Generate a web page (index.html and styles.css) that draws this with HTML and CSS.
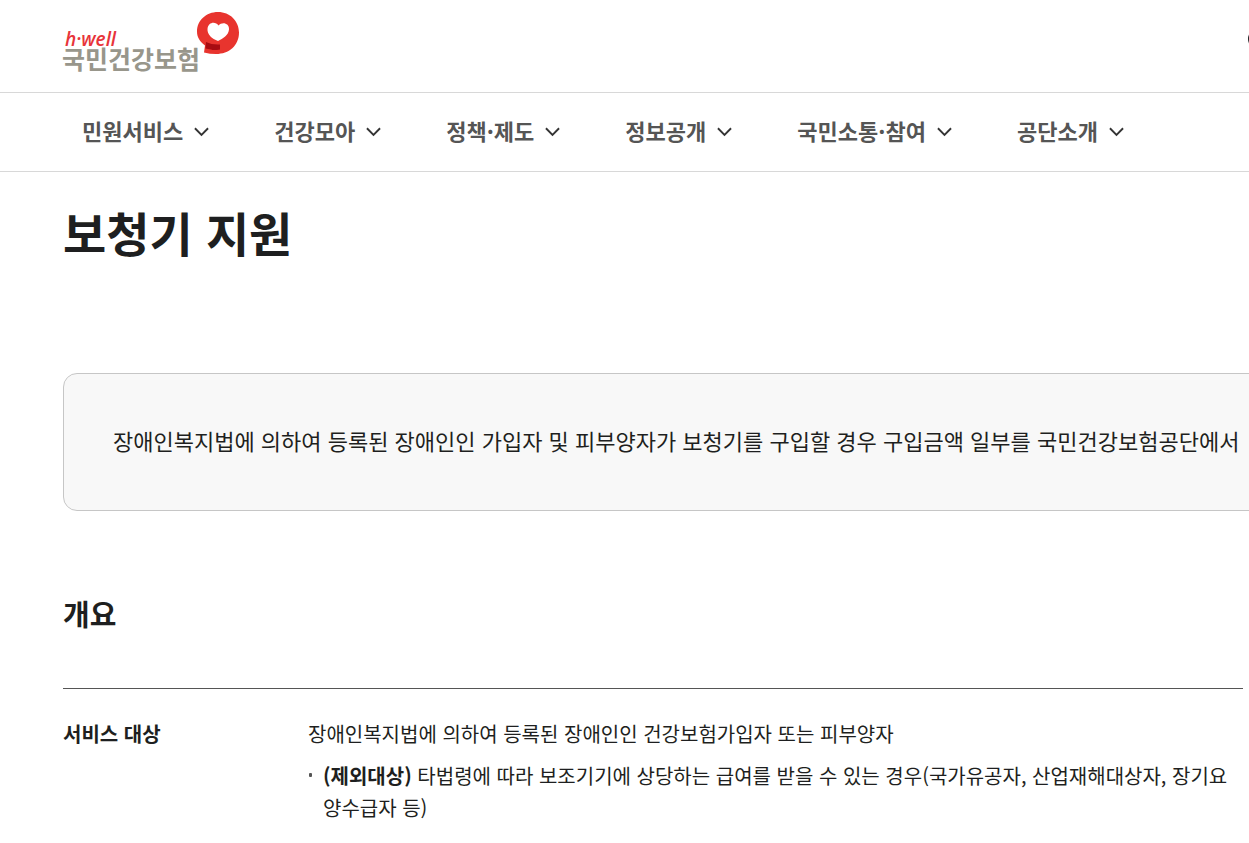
FILE: index.html
```html
<!DOCTYPE html>
<html lang="ko">
<head>
    <meta charset="UTF-8">
    <meta name="viewport" content="width=device-width, initial-scale=1">
    <title>보청기 지원 | 국민건강보험</title>
    <link rel="stylesheet" href="styles.css">
</head>
<body>
    <header class="header">
        <a href="#" class="logo">
            <svg width="180" height="66" viewBox="0 0 180 66" role="img" aria-label="h-well 국민건강보험">
                <text class="logo-en" x="2" y="37">h·well</text>
                <text class="logo-ko" x="-1" y="60">국민건강보험</text>
                <path fill="#e8342e" d="M155 3c12 0 21 9 21 20.500c0 13-10 21.500-23 21.500q-6 0-12-1.500l1-7c-5-4-8-8-8-14c0-11 9-19.500 21-19.500z"/>
                <path fill="#a80c12" d="M143 33q6 3 14 2.500v5q-7 1-9 0l-5.500-1z"/>
                <path fill="#fff" d="M155 32c-6-2-11-7-10.500-12c.5-7 8-8 11-3.500c3.500-4 11-2.500 10.500 4c-.5 6-6 9-11 11.500z"/>
            </svg>
        </a>
        <button type="button" class="btn-search" aria-label="검색">
            <svg width="24" height="24" viewBox="0 0 24 24" fill="none" stroke="#1e2124" stroke-width="2">
                <circle cx="10" cy="10" r="9"/>
                <path d="M17 17l6 6"/>
            </svg>
        </button>
    </header>

    <nav class="gnb">
        <ul class="gnb-list">
            <li><button type="button">민원서비스<svg class="arrow" viewBox="0 0 16 10"><path d="M1 1l7 7 7-7"/></svg></button></li>
            <li><button type="button">건강모아<svg class="arrow" viewBox="0 0 16 10"><path d="M1 1l7 7 7-7"/></svg></button></li>
            <li><button type="button">정책·제도<svg class="arrow" viewBox="0 0 16 10"><path d="M1 1l7 7 7-7"/></svg></button></li>
            <li><button type="button">정보공개<svg class="arrow" viewBox="0 0 16 10"><path d="M1 1l7 7 7-7"/></svg></button></li>
            <li><button type="button">국민소통·참여<svg class="arrow" viewBox="0 0 16 10"><path d="M1 1l7 7 7-7"/></svg></button></li>
            <li><button type="button">공단소개<svg class="arrow" viewBox="0 0 16 10"><path d="M1 1l7 7 7-7"/></svg></button></li>
        </ul>
    </nav>

    <main class="content">
        <h1>보청기 지원</h1>

        <div class="intro-box">
            <p>장애인복지법에 의하여 등록된 장애인인 가입자 및 피부양자가 보청기를 구입할 경우 구입금액 일부를 국민건강보험공단에서</p>
        </div>

        <h2>개요</h2>
        <dl class="info">
            <dt>서비스 대상</dt>
            <dd>
                <p>장애인복지법에 의하여 등록된 장애인인 건강보험가입자 또는 피부양자</p>
                <ul class="dot-list">
                    <li><strong>(제외대상)</strong> 타법령에 따라 보조기기에 상당하는 급여를 받을 수 있는 경우(국가유공자, 산업재해대상자, 장기요양수급자 등)</li>
                </ul>
            </dd>
        </dl>
    </main>
</body>
</html>
```

FILE: styles.css
```css
* {
    box-sizing: border-box;
}
body {
    margin: 0;
    background: #fff;
    color: #1e1f20;
    font-family: "Noto Sans CJK KR", sans-serif;
    font-size: 20px;
    line-height: 32px;
    overflow-x: hidden;
}
h1, h2, p, ul, dl, dd {
    margin: 0;
    padding: 0;
}
ul {
    list-style: none;
}
button {
    padding: 0;
    border: 0;
    background: none;
    color: inherit;
    font: inherit;
    cursor: pointer;
}

/* header */
.header {
    display: flex;
    justify-content: space-between;
    align-items: flex-start;
    height: 93px;
    padding: 9px 0 0 63px;
    border-bottom: 1px solid #d8d8d8;
}
.logo svg {
    display: block;
    overflow: visible;
}
.logo-en {
    fill: #e8343a;
    font-family: "Open Sans", sans-serif;
    font-size: 19px;
    font-style: italic;
    font-weight: 600;
}
.logo-ko {
    fill: #98968b;
    font-size: 25px;
    font-weight: 700;
}
.btn-search {
    margin: 20px -23px 0 0;
}
.btn-search svg {
    display: block;
}

/* menu */
.gnb {
    padding: 20px 82px 24px;
    border-bottom: 1px solid #d8d8d8;
}
.gnb-list {
    display: flex;
    gap: 65px;
}
.gnb-list button {
    display: flex;
    align-items: center;
    gap: 11px;
    color: #555;
    font-size: 22px;
    font-weight: 700;
    line-height: 34px;
    white-space: nowrap;
}
.arrow {
    width: 15px;
    height: 10px;
    margin-top: 4px;
    fill: none;
    stroke: #333;
    stroke-width: 2;
}

/* content */
.content {
    padding: 28px 6px 20px 63px;
}
h1 {
    font-size: 47px;
    line-height: 64px;
}
.intro-box {
    width: max-content;
    margin-top: 109px;
    padding: 46px 49px 50px;
    border: 1px solid #c6c6c6;
    border-radius: 14px;
    background: #f8f8f8;
    font-size: 22px;
    line-height: 40px;
    white-space: nowrap;
}
h2 {
    margin-top: 80px;
    font-size: 29px;
    line-height: 44px;
}
.info {
    display: grid;
    grid-template-columns: 245px 1fr;
    margin-top: 53px;
    padding-top: 29px;
    border-top: 1px solid #555;
}
.info dt {
    font-weight: 700;
}
.dot-list {
    margin-top: 10px;
}
.dot-list li {
    position: relative;
    padding: 0 14px 0 15px;
}
.dot-list li::before {
    content: "";
    position: absolute;
    top: 13px;
    left: 1px;
    width: 3px;
    height: 4px;
    border-radius: 1px;
    background: #555;
}
```
